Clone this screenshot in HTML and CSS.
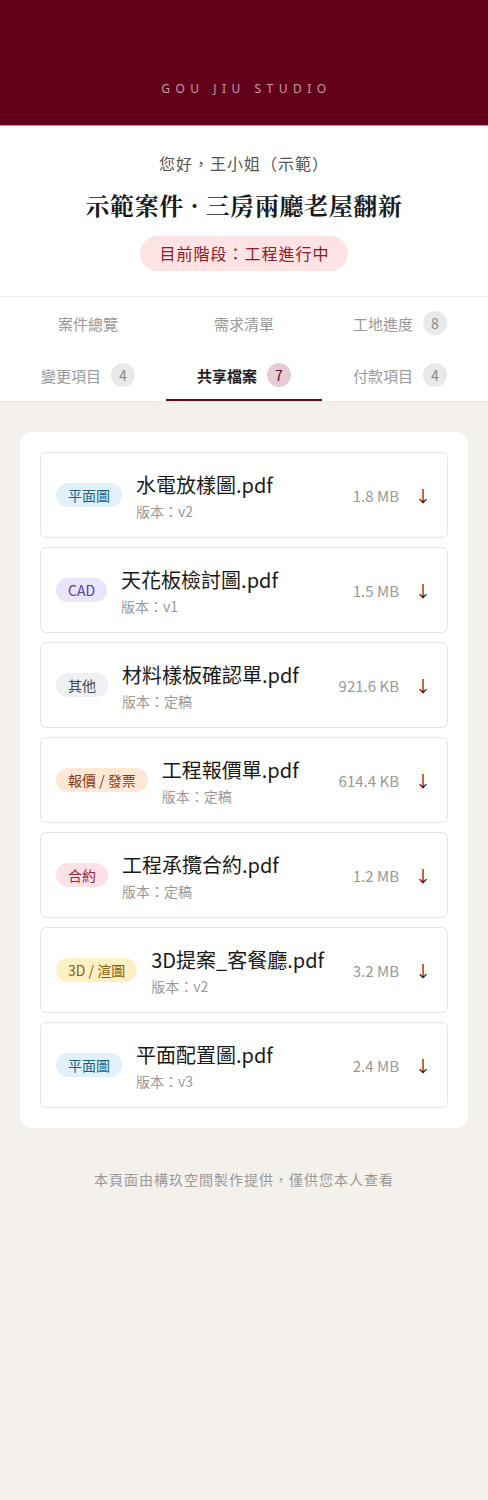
FILE: index.html
```html
<!DOCTYPE html>
<html lang="zh-Hant">
<head>
<meta charset="utf-8">
<title>共享檔案</title>
<link rel="stylesheet" href="styles.css">
</head>
<body>
<header class="brand">
  <div class="brand-name">GOU JIU STUDIO</div>
</header>
<section class="hero">
  <div class="greeting">您好，王小姐（示範）</div>
  <h1 class="title">示範案件 · 三房兩廳老屋翻新</h1>
  <div class="stage">目前階段：工程進行中</div>
</section>
<nav class="tabs">
  <div class="tab">案件總覽</div>
  <div class="tab">需求清單</div>
  <div class="tab">工地進度<span class="badge">8</span></div>
  <div class="tab">變更項目<span class="badge">4</span></div>
  <div class="tab active">共享檔案<span class="badge">7</span></div>
  <div class="tab">付款項目<span class="badge">4</span></div>
</nav>
<main class="content">
  <div class="card">
    <div class="file">
      <span class="tag tag-plan">平面圖</span>
      <div class="info"><div class="name">水電放樣圖.pdf</div><div class="ver">版本：v2</div></div>
      <span class="size">1.8 MB</span><span class="dl">↓</span>
    </div>
    <div class="file">
      <span class="tag tag-cad">CAD</span>
      <div class="info"><div class="name">天花板檢討圖.pdf</div><div class="ver">版本：v1</div></div>
      <span class="size">1.5 MB</span><span class="dl">↓</span>
    </div>
    <div class="file">
      <span class="tag tag-other">其他</span>
      <div class="info"><div class="name">材料樣板確認單.pdf</div><div class="ver">版本：定稿</div></div>
      <span class="size">921.6 KB</span><span class="dl">↓</span>
    </div>
    <div class="file">
      <span class="tag tag-quote">報價 / 發票</span>
      <div class="info"><div class="name">工程報價單.pdf</div><div class="ver">版本：定稿</div></div>
      <span class="size">614.4 KB</span><span class="dl">↓</span>
    </div>
    <div class="file">
      <span class="tag tag-contract">合約</span>
      <div class="info"><div class="name">工程承攬合約.pdf</div><div class="ver">版本：定稿</div></div>
      <span class="size">1.2 MB</span><span class="dl">↓</span>
    </div>
    <div class="file">
      <span class="tag tag-3d">3D / 渲圖</span>
      <div class="info"><div class="name">3D提案_客餐廳.pdf</div><div class="ver">版本：v2</div></div>
      <span class="size">3.2 MB</span><span class="dl">↓</span>
    </div>
    <div class="file">
      <span class="tag tag-plan">平面圖</span>
      <div class="info"><div class="name">平面配置圖.pdf</div><div class="ver">版本：v3</div></div>
      <span class="size">2.4 MB</span><span class="dl">↓</span>
    </div>
  </div>
  <footer class="foot">本頁面由構玖空間製作提供，僅供您本人查看</footer>
</main>
</body>
</html>
```

FILE: styles.css
```css
* { box-sizing: border-box; }
html, body { margin: 0; padding: 0; }
body {
  background: #f4f0eb;
  font-family: "Noto Sans CJK TC", "Noto Sans", sans-serif;
  color: #222;
  min-height: 1500px;
}
.brand {
  background: #62001a;
  height: 126px;
  border-bottom: 1px solid #c8909c;
  display: flex;
  align-items: flex-end;
  justify-content: center;
  padding-bottom: 28px;
}
.brand-name {
  font-family: "Noto Sans", "Liberation Sans", sans-serif;
  font-size: 12px;
  letter-spacing: 5.5px;
  color: #c99aa6;
  line-height: 16px;
  padding-left: 5px;
}
.hero {
  background: #fff;
  text-align: center;
  padding: 25px 0 25px;
  border-bottom: 1px solid #ebebeb;
}
.greeting {
  font-size: 16px;
  line-height: 24px;
  letter-spacing: 1px;
  color: #555;
}
.title {
  margin: 12px 0 0;
  font-family: "Noto Serif CJK TC", serif;
  font-size: 24px;
  line-height: 36px;
  font-weight: 700;
  letter-spacing: 0.6px;
  color: #1a1a1a;
}
.stage {
  display: inline-block;
  margin-top: 13px;
  height: 35px;
  line-height: 35px;
  padding: 0 18px 0 19px;
  border-radius: 18px;
  background: #fde3e3;
  color: #8b1a2b;
  font-size: 16px;
  letter-spacing: 1px;
}
.tabs {
  background: #fff;
  display: grid;
  grid-template-columns: repeat(3, 156px);
  padding: 0 10px;
  border-bottom: 1px solid #ece8e3;
}
.tab {
  height: 52px;
  display: flex;
  align-items: center;
  justify-content: center;
  gap: 10px;
  font-size: 15px;
  color: #999;
  border-bottom: 2px solid transparent;
  padding-top: 2px;
}
.tab.active {
  color: #222;
  font-weight: 700;
  border-bottom-color: #5a0a1c;
}
.badge {
  width: 24px;
  height: 24px;
  border-radius: 50%;
  background: #e9e9e9;
  color: #888;
  font-size: 14px;
  font-weight: 400;
  display: flex;
  align-items: center;
  justify-content: center;
}
.tab.active .badge {
  background: #e5ced3;
  color: #5a0a1c;
}
.content {
  padding: 30px 20px 0;
}
.card {
  background: #fff;
  border-radius: 12px;
  padding: 20px;
  display: flex;
  flex-direction: column;
  gap: 9px;
}
.file {
  height: 86px;
  border: 1px solid #e6e6e6;
  border-radius: 6px;
  display: flex;
  align-items: center;
  padding: 0 16px 0 15px;
}
.tag {
  flex: none;
  height: 24px;
  line-height: 24px;
  padding: 0 12px;
  border-radius: 12px;
  font-size: 14px;
  margin-right: 14px;
}
.tag-plan { background: #e1f1fc; color: #17607e; }
.tag-cad { background: #ebe5fb; color: #5a3a9c; }
.tag-other { background: #eef0f3; color: #3f4650; }
.tag-quote { background: #fde8d6; color: #8a3a12; }
.tag-contract { background: #fde1e6; color: #9b1b3c; }
.tag-3d { background: #fdf0c5; color: #8a5a0e; }
.info {
  display: flex;
  flex-direction: column;
  margin-top: 2px;
}
.name {
  font-size: 20px;
  line-height: 28px;
  color: #1a1a1a;
}
.ver {
  font-size: 14px;
  line-height: 21px;
  margin-top: 2px;
  color: #999;
}
.size {
  margin-left: auto;
  font-size: 15px;
  color: #999;
  white-space: nowrap;
}
.dl {
  margin-left: 16px;
  font-size: 16px;
  color: #4e0718;
  width: 16px;
  text-align: center;
}
.foot {
  text-align: center;
  font-size: 14px;
  letter-spacing: 1px;
  color: #999;
  margin-top: 41px;
  line-height: 20px;
}
```
